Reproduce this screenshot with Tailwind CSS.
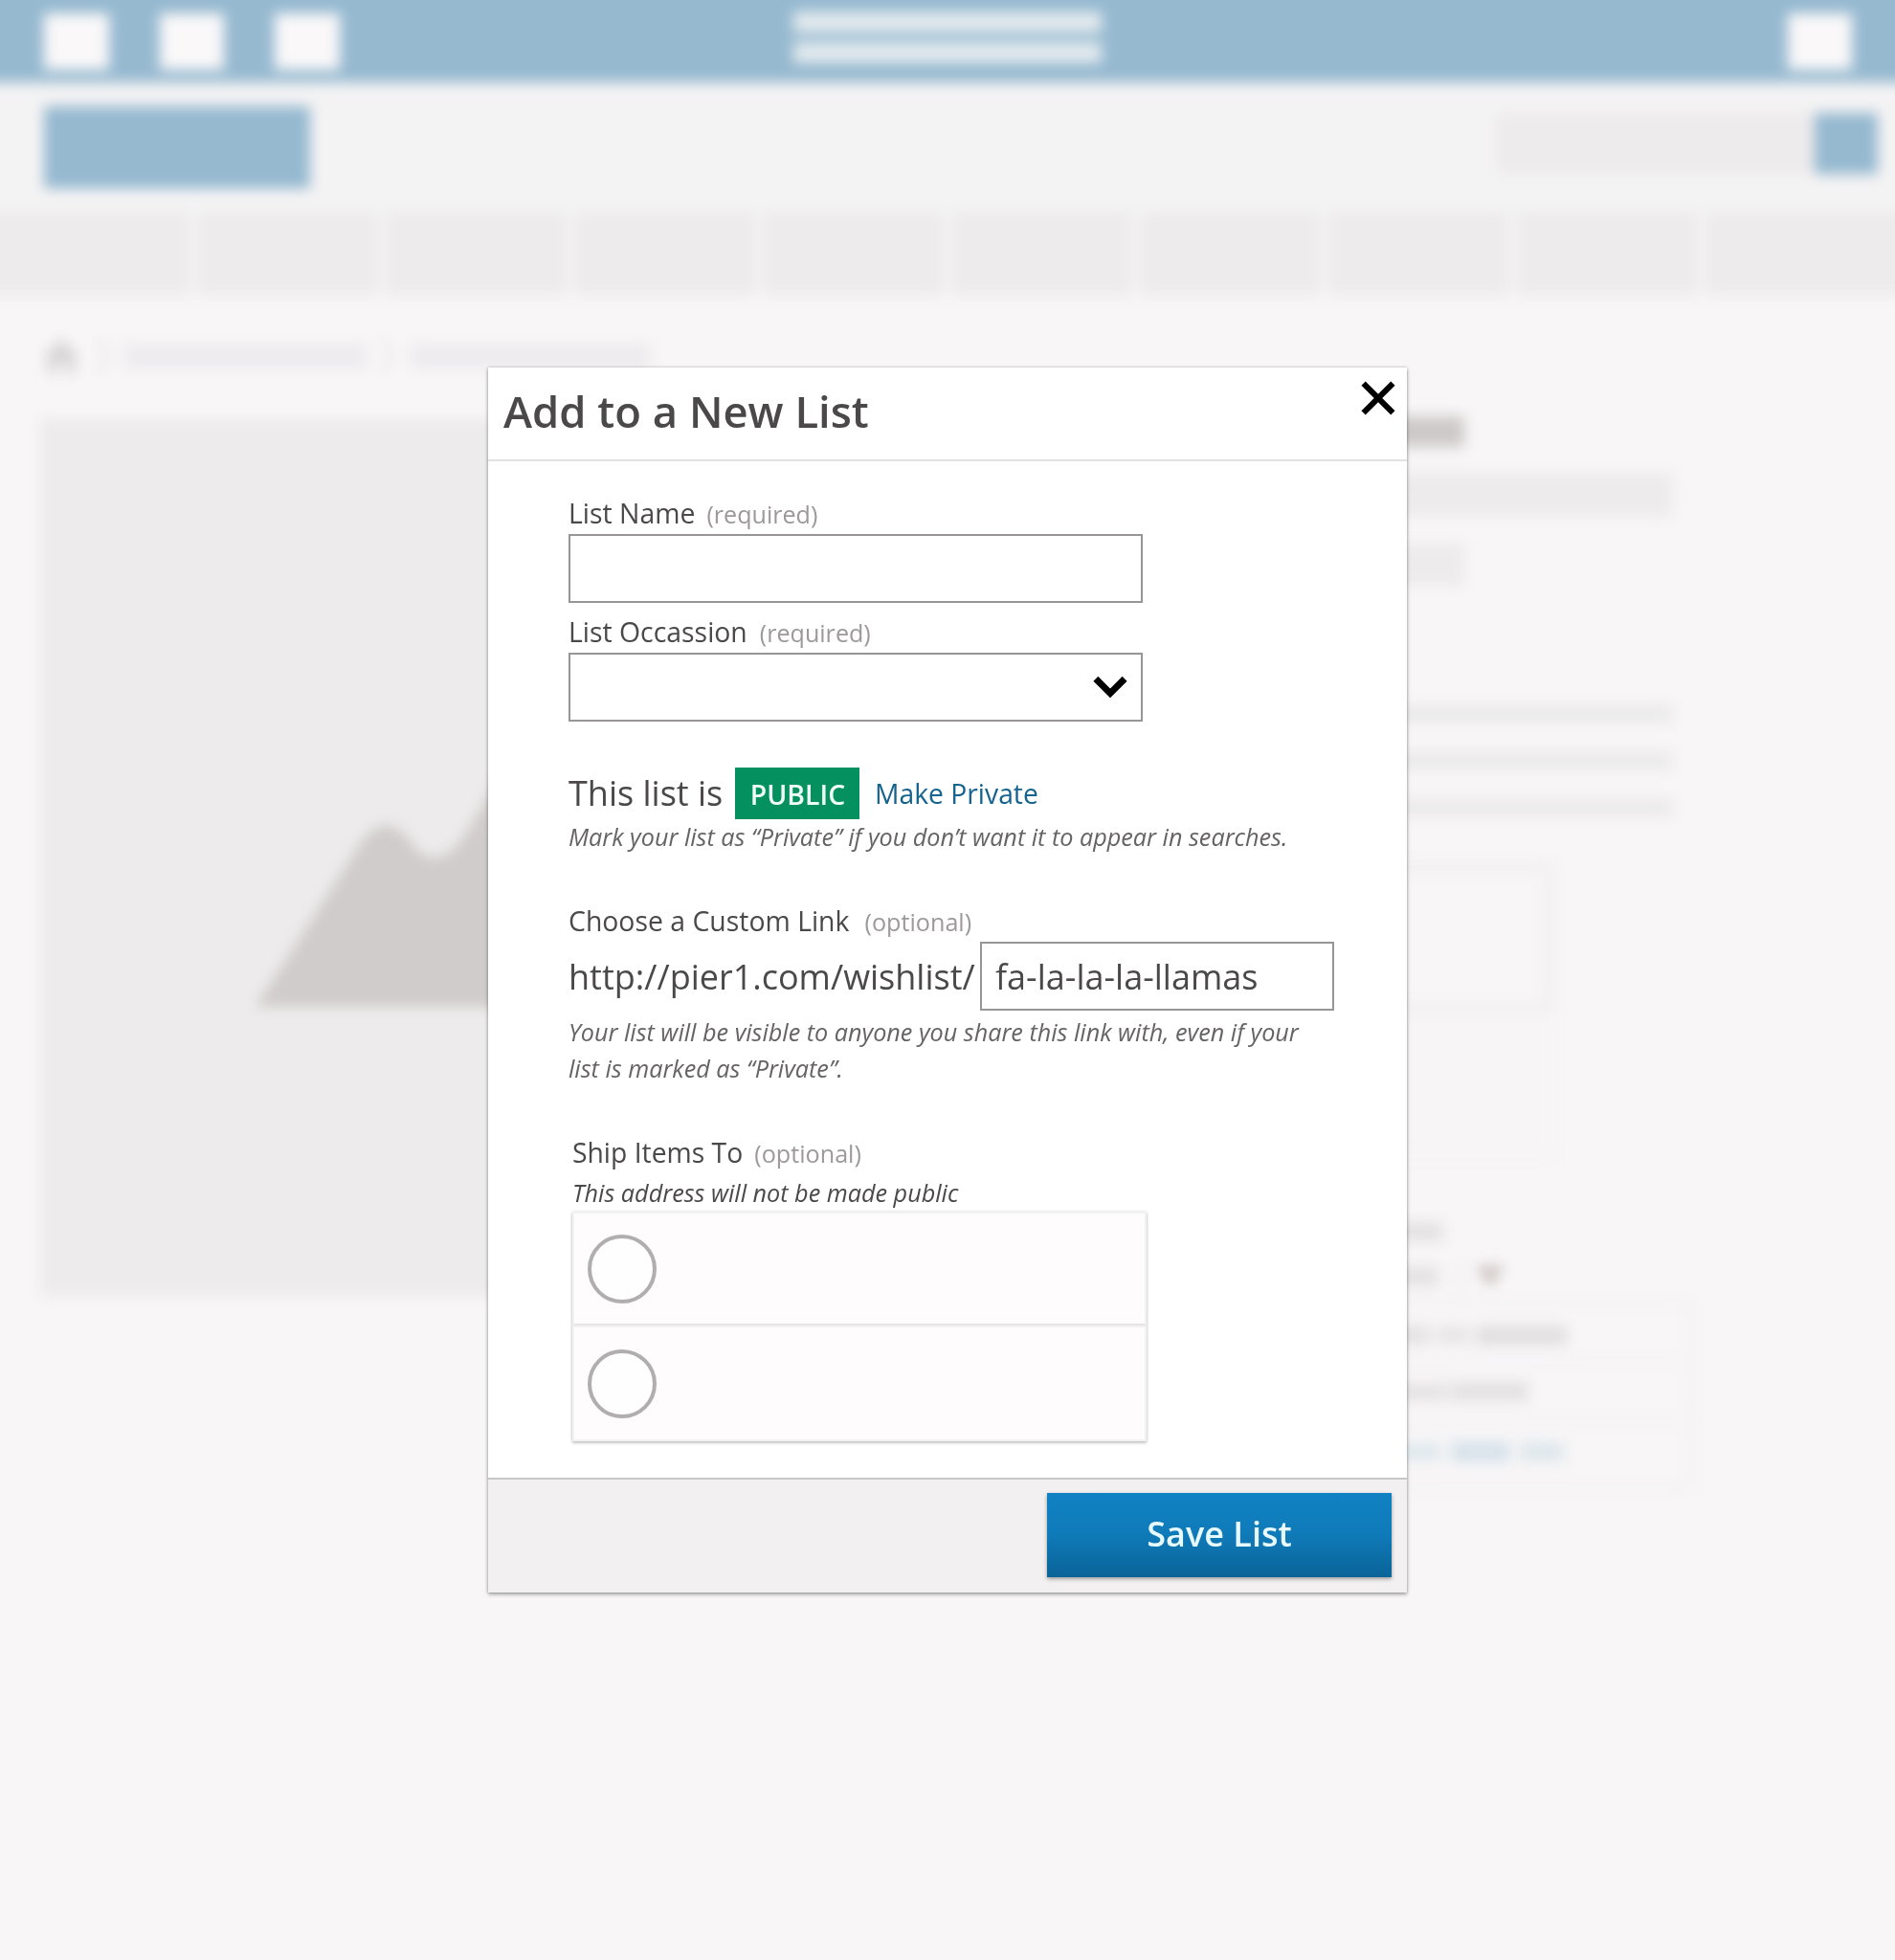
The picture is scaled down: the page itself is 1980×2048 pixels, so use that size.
<!DOCTYPE html>
<html lang="en">
<head>
<meta charset="utf-8">
<title>Add to a New List</title>
<script src="https://cdn.jsdelivr.net/npm/@tailwindcss/browser@4"></script>
</head>
<body class="h-[2048px] overflow-hidden bg-[#f8f6f7] font-['Open_Sans',sans-serif] text-[#4b4849]">

<!-- Page behind the dialog -->
<div class="h-[2048px] overflow-hidden" aria-hidden="true">
  <div class="-mx-10 -mt-10 px-10 pt-10 blur-[7px]">
    <div class="-mx-10 -mt-10 flex h-[126px] justify-between bg-[#96b9d0] px-10 pt-10">
      <div class="flex gap-[53px] pt-[14px] pl-[46px]">
        <div class="h-[59px] w-[68px] bg-[#faf8f9]"></div>
        <div class="h-[59px] w-[67px] bg-[#faf8f9]"></div>
        <div class="h-[59px] w-[68px] bg-[#faf8f9]"></div>
      </div>
      <div class="mr-[244px] flex w-[322px] flex-col gap-[10px] pt-[12px]">
        <div class="h-[22px] bg-[#e3eaee]"></div>
        <div class="h-[22px] bg-[#e3eaee]"></div>
      </div>
      <div class="pt-[14px] pr-[45px]">
        <div class="h-[59px] w-[67px] bg-[#faf8f9]"></div>
      </div>
    </div>
    <div class="-mx-10 flex h-[136px] items-start justify-between bg-[#f4f3f4] px-10">
      <div class="mt-[25px] ml-[46px] h-[86px] w-[278px] bg-[#96b9d0]"></div>
      <div class="mt-[32px] mr-[18px] flex">
        <div class="h-[64px] w-[332px] bg-[#edebec]"></div>
        <div class="h-[64px] w-[66px] bg-[#96b9d0]"></div>
      </div>
    </div>
    <div class="-mx-10 flex h-[87px] gap-[10px] bg-[#f4f3f4]">
      <div class="w-[237px] bg-[#edebec]"></div>
      <div class="w-[187px] bg-[#edebec]"></div>
      <div class="w-[187px] bg-[#edebec]"></div>
      <div class="w-[187px] bg-[#edebec]"></div>
      <div class="w-[187px] bg-[#edebec]"></div>
      <div class="w-[187px] bg-[#edebec]"></div>
      <div class="w-[187px] bg-[#edebec]"></div>
      <div class="w-[187px] bg-[#edebec]"></div>
      <div class="w-[187px] bg-[#edebec]"></div>
      <div class="flex-1 bg-[#edebec]"></div>
    </div>
    <div class="flex h-[126px] items-center pl-[44px]">
      <svg class="size-[40px]" viewBox="0 0 40 40" fill="#d7d5d6"><path d="M20 2 39 21H34V38H24V26H16V38H6V21H1Z"/></svg>
      <svg class="ml-[15px] h-[40px] w-[20px]" viewBox="0 0 20 40" fill="none" stroke="#e9e7e8" stroke-width="4"><path d="M5 3 15 20 5 37"/></svg>
      <div class="ml-[11px] h-[25px] w-[253px] bg-[#edebed]"></div>
      <svg class="ml-[12px] h-[40px] w-[20px]" viewBox="0 0 20 40" fill="none" stroke="#e9e7e8" stroke-width="4"><path d="M5 3 15 20 5 37"/></svg>
      <div class="ml-[14px] h-[25px] w-[250px] bg-[#edebed]"></div>
    </div>
    <div class="flex gap-[42px] pl-[42px]">
      <div class="mt-[3px] h-[916px] w-[916px] bg-[#edebec]">
        <svg class="size-[916px]" viewBox="0 0 916 916" fill="#d0cccb"><path d="M225 614 332 447Q357 408 383 436 409 478 440 440L520 310Q548 268 576 310L780 614Z"/></svg>
      </div>
      <div class="w-[780px]">
        <div class="h-[32px] w-[530px] bg-[#cdc9c8]"></div>
        <div class="mt-[27px] h-[46px] w-[748px] bg-[#edebec]"></div>
        <div class="mt-[28px] h-[44px] w-[530px] bg-[#edebec]"></div>
        <div class="mt-[124px] h-[20px] w-[748px] bg-[#ecebec]"></div>
        <div class="mt-[29px] h-[20px] w-[748px] bg-[#ecebec]"></div>
        <div class="mt-[29px] h-[20px] w-[748px] bg-[#ecebec]"></div>
        <div class="mt-[47px] h-[158px] w-[624px] border-[11px] border-[#f1f0f1]"></div>
        <div class="h-[150px] w-[623px] bg-[#f7f5f6]"></div>
        <div class="mt-[68px] h-[20px] w-[508px] bg-[#e4e2e3]"></div>
        <div class="mt-[27px] flex h-[20px] items-center">
          <div class="h-[20px] w-[503px] bg-[#e4e2e3]"></div>
          <div class="ml-[20px] h-[36px] w-[4px] bg-[#efeeef]"></div>
          <svg class="ml-[15px] h-[22px] w-[30px]" viewBox="0 0 30 22" fill="#cdc3c0"><path d="M0 0H30L15 22Z"/></svg>
        </div>
        <div class="mt-[15px] h-[197px] w-[768px] border-4 border-[#f2f0f1]">
          <div class="flex h-[62px] items-center gap-[7px] border-b-4 border-[#f3f1f2] pt-[6px]">
            <div class="h-[20px] w-[490px] bg-[#e5e3e4]"></div>
            <div class="h-[18px] w-[34px] bg-[#e7e5e6]"></div>
            <div class="h-[21px] w-[95px] bg-[#e2e0e1]"></div>
          </div>
          <div class="flex h-[62px] items-center gap-[4px] border-b-4 border-[#f3f1f2]">
            <div class="h-[19px] w-[508px] bg-[#e5e3e4]"></div>
            <div class="h-[20px] w-[81px] bg-[#e3e1e2]"></div>
          </div>
          <div class="flex h-[60px] items-center gap-[10px]">
            <div class="h-[18px] w-[502px] bg-[#dfe8ed]"></div>
            <div class="h-[22px] w-[62px] bg-[#d8e3eb]"></div>
            <div class="h-[20px] w-[46px] bg-[#dee7ec]"></div>
          </div>
        </div>
      </div>
    </div>
  </div>
</div>

<!-- Dialog -->
<div class="fixed inset-0 flex h-[2048px] items-center justify-center">
  <section class="flex h-[1280px] w-[960px] flex-col bg-white shadow-[0_2px_4px_rgba(0,0,0,0.32),0_0_3px_rgba(0,0,0,0.22)]" role="dialog">
    <header class="flex h-[98px] shrink-0 items-center justify-between border-b-2 border-[#e3e2e2] pr-3 pl-4">
      <h1 class="pb-[7px] text-[45.4px] leading-[56px] font-semibold whitespace-nowrap">Add to a New List</h1>
      <button class="mt-[14px] self-start" aria-label="Close">
        <svg class="size-[36px]" viewBox="0 0 36 36" fill="none" stroke="#000" stroke-width="6"><path d="M2.6 2.6 33.4 33.4M33.4 2.6 2.6 33.4"/></svg>
      </button>
    </header>

    <div class="flex-1 px-[84px] pt-[35px]">
      <label class="flex h-[38px] items-baseline gap-[12px] text-[28.4px] leading-[38px]">List Name <span class="text-[25.1px] text-[#9d999a]">(required)</span></label>
      <div class="mt-[3px] h-[72px] w-[600px] border-2 border-[#979596]"></div>

      <label class="mt-[11px] flex h-[38px] items-baseline gap-[13px] text-[28.4px] leading-[38px]">List Occassion <span class="text-[25.1px] text-[#9d999a]">(required)</span></label>
      <div class="mt-[3px] flex h-[72px] w-[600px] items-center justify-end border-2 border-[#979596] pr-[14px]">
        <svg class="h-[24px] w-[36px]" viewBox="0 0 36 24" fill="none" stroke="#000" stroke-width="7"><path d="M2.9 3.3 18 18.4 33.1 3.3"/></svg>
      </div>

      <div class="mt-[48px] flex h-[54px] items-center">
        <span class="w-[174px] text-4xl">This list is</span>
        <span class="flex h-[54px] w-[130px] items-center justify-center bg-[#04915f] pt-[2px] pl-px text-[28.4px] font-semibold text-[#effff8]">PUBLIC</span>
        <a class="ml-[16px] text-[28.3px] text-[#15638f]">Make Private</a>
      </div>
      <p class="text-[25.2px] leading-[36px] whitespace-nowrap text-[#666364] italic">Mark your list as “Private” if you don’t want it to appear in searches.</p>

      <label class="mt-[51px] flex h-[38px] items-baseline gap-[16px] text-[28.4px] leading-[38px]">Choose a Custom Link <span class="text-[25.2px] text-[#9d999a]">(optional)</span></label>
      <div class="mt-[3px] flex h-[72px] items-center text-4xl">
        <span class="w-[430px] shrink-0 pt-[2px] whitespace-nowrap">http://pier1.com/wishlist/</span>
        <div class="flex h-[72px] w-[370px] shrink-0 items-center border-2 border-[#979596] pt-[2px] pl-[14px]">fa-la-la-la-llamas</div>
      </div>
      <p class="mt-[3px] text-[25.2px] leading-[38px] whitespace-nowrap text-[#666364] italic">Your list will be visible to anyone you share this link with, even if your<br>list is marked as “Private”.</p>

      <div class="ml-1">
        <label class="mt-[50px] flex h-[38px] items-baseline gap-[12px] text-[28.3px] leading-[38px]">Ship Items To <span class="text-[25.2px] text-[#9d999a]">(optional)</span></label>
        <p class="mt-[7px] text-[25.2px] leading-[32px] italic">This address will not be made public</p>
        <div class="mt-[4px] w-[600px] shadow-[0_2px_3px_rgba(0,0,0,0.2),0_0_3px_rgba(0,0,0,0.14)]">
          <div class="flex h-[119px] items-center border-2 border-[#f3f2f3] border-b-[#e6e4e5] bg-[#fefcfd] pl-[14px]"><span class="size-[72px] rounded-full border-4 border-[#b1aeaf] bg-[#fefefe]"></span></div>
          <div class="flex h-[121px] items-center border-2 border-[#f3f2f3] bg-[#fefcfd] pl-[14px]"><span class="size-[72px] rounded-full border-4 border-[#b1aeaf] bg-[#fefefe]"></span></div>
        </div>
      </div>
    </div>

    <footer class="flex h-[120px] shrink-0 justify-end border-t-2 border-[#c9c7c8] bg-[#f2f0f1] pt-[14px] pr-4">
      <button class="h-[88px] w-[360px] bg-linear-to-b from-[#1182c4] via-[#0f7ab8] to-[#0a6498] pb-[2px] text-4xl font-semibold text-[#e6faff] shadow-[0_2px_4px_rgba(0,0,0,0.35)]">Save List</button>
    </footer>
  </section>
</div>
</body>
</html>
